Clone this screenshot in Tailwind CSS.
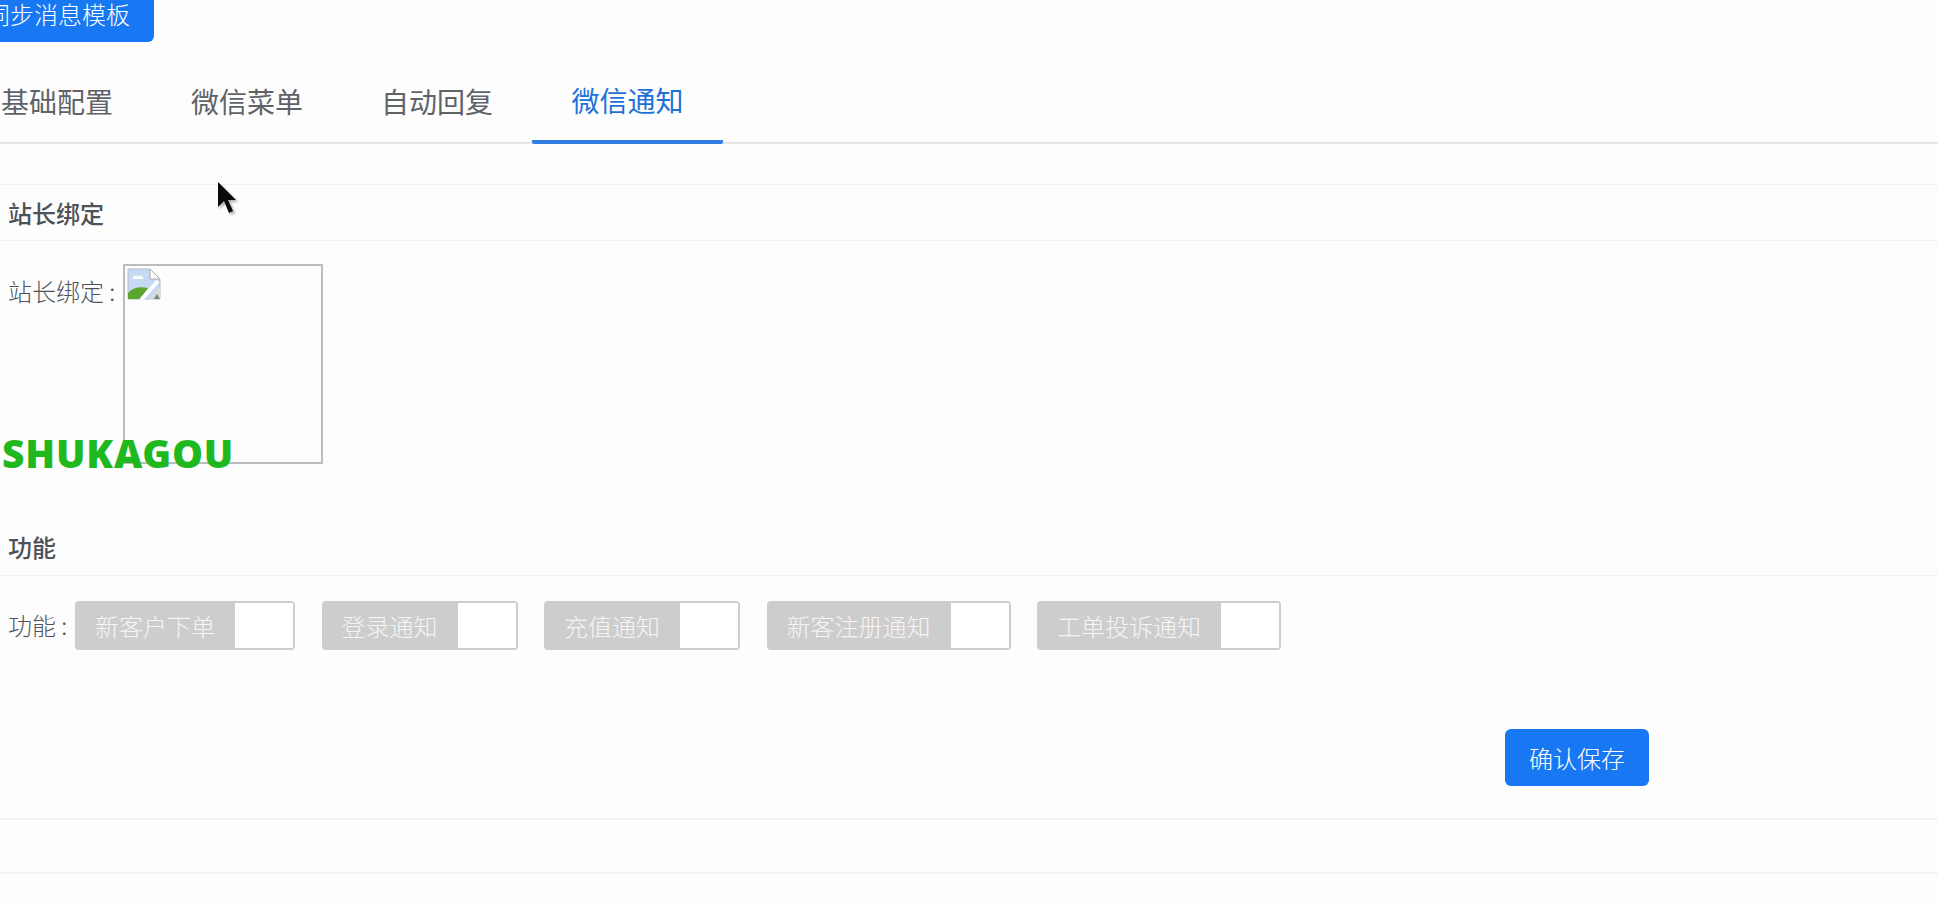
<!DOCTYPE html>
<html lang="zh-CN">
<head>
<meta charset="UTF-8">
<meta name="viewport" content="width=device-width, initial-scale=1.0">
<title>微信通知</title>
<script src="https://cdn.jsdelivr.net/npm/@tailwindcss/browser@4"></script>
</head>
<body class="relative h-[906px] overflow-hidden bg-[#fdfdfd] font-['Noto_Sans_CJK_SC','Noto_Sans',sans-serif] text-[#5f6368]">

<!-- Sync button -->
<div class="-mt-[15px] -ml-[38px]">
  <button class="h-[57px] px-6 rounded-md bg-[#1877f2] text-white text-2xl font-light">同步消息模板</button>
</div>

<!-- Tabs -->
<nav class="mt-[19px] -ml-[38px] flex border-b-2 border-[#e6e6e6] text-[28px] h-[83px]">
  <a class="w-[190px] h-[81px] flex items-center justify-center pb-[1px]">基础配置</a>
  <a class="w-[190px] h-[81px] flex items-center justify-center pb-[1px]">微信菜单</a>
  <a class="w-[190px] h-[81px] flex items-center justify-center pb-[1px]">自动回复</a>
  <a class="w-[191px] h-[83px] flex items-center justify-center border-b-4 border-[#2f7de1] rounded-b-xs pb-[1px] text-[#1d72d8]">微信通知</a>
</nav>

<!-- 站长绑定 -->
<section class="mt-[40px] border-t border-[#f0f0f0]">
  <h2 class="h-[56px] pl-[8px] flex items-center border-b border-[#f0f0f0] text-2xl font-medium text-[#4d5158]">站长绑定</h2>
  <div class="mt-[23px] pl-[8px] flex">
    <label class="w-[115px] pt-[8px] text-2xl leading-[38px] font-light text-[#50545a]">站长绑定 :</label>
    <div class="w-[200px] h-[200px] border-2 border-[#bcbcbc] p-[2px]">
      <svg width="34" height="32" viewBox="0 0 34 32">
        <path d="M1 1H23L33 11V31H1Z" fill="#c5d9f5" stroke="#b9bcc4"/>
        <path d="M23 1V11H33Z" fill="#fff" stroke="#a9acb4"/>
        <path d="M5 11q2-5 6-3q4-2 6 3Z" fill="#fff"/>
        <path d="M1 31V25Q8 17 21 20L13 31Z" fill="#5aa62f"/>
        <path d="M14 32L31 13" stroke="#fff" stroke-width="4"/>
        <path d="M22 31L33 19V31Z" fill="#d8dcd8"/>
        <path d="M27 31L30 26L33 31Z" fill="#7f8479"/>
      </svg>
    </div>
  </div>
</section>

<!-- 功能 -->
<section class="mt-[56px]">
  <h2 class="h-[56px] pl-[8px] pb-[2px] flex items-center border-b border-[#f0f0f0] text-2xl font-medium text-[#4d5158]">功能</h2>
  <div class="mt-[25px] pl-[8px] flex items-center">
    <label class="w-[67px] pb-[2px] text-2xl font-light text-[#50545a]">功能 :</label>
    <div class="flex gap-[26.5px] text-2xl font-light text-[#f5f5f5]">
      <div class="h-[49px] flex rounded border-2 border-[#cdcdcd]"><span class="pl-[18px] pr-[20px] flex items-center bg-[#cdcdcd]">新客户下单</span><span class="w-[58px] bg-white"></span></div>
      <div class="h-[49px] flex rounded border-2 border-[#cdcdcd]"><span class="pl-[18px] pr-[20px] flex items-center bg-[#cdcdcd]">登录通知</span><span class="w-[58px] bg-white"></span></div>
      <div class="h-[49px] flex rounded border-2 border-[#cdcdcd]"><span class="pl-[18px] pr-[20px] flex items-center bg-[#cdcdcd]">充值通知</span><span class="w-[58px] bg-white"></span></div>
      <div class="h-[49px] flex rounded border-2 border-[#cdcdcd]"><span class="pl-[18px] pr-[20px] flex items-center bg-[#cdcdcd]">新客注册通知</span><span class="w-[58px] bg-white"></span></div>
      <div class="h-[49px] flex rounded border-2 border-[#cdcdcd]"><span class="pl-[18px] pr-[20px] flex items-center bg-[#cdcdcd]">工单投诉通知</span><span class="w-[58px] bg-white"></span></div>
    </div>
  </div>
  <div class="mt-[79px] flex justify-end pr-[289px]">
    <button class="w-[144px] h-[57px] rounded-md bg-[#1877f2] text-white text-2xl font-light">确认保存</button>
  </div>
</section>

<div class="mt-[32px] h-[56px] border-y-2 border-t-[#f2f2f2] border-b-[#f3f3f3]"></div>

<!-- Watermark and pointer -->
<div class="absolute left-[2px] top-[430px] font-['Noto_Sans',sans-serif] text-[39px] leading-[46px] font-black tracking-[0.8px] text-[#1fb91f]">SHUKAGOU</div>
<svg class="absolute left-[217px] top-[181px] drop-shadow-[2px_2px_1px_rgba(0,0,0,0.3)]" width="20" height="36" viewBox="0 0 20 36">
  <path d="M1 1V26L7 20L12 32L16 30L11 19H19Z" fill="#0b0b0b"/>
</svg>

</body>
</html>
